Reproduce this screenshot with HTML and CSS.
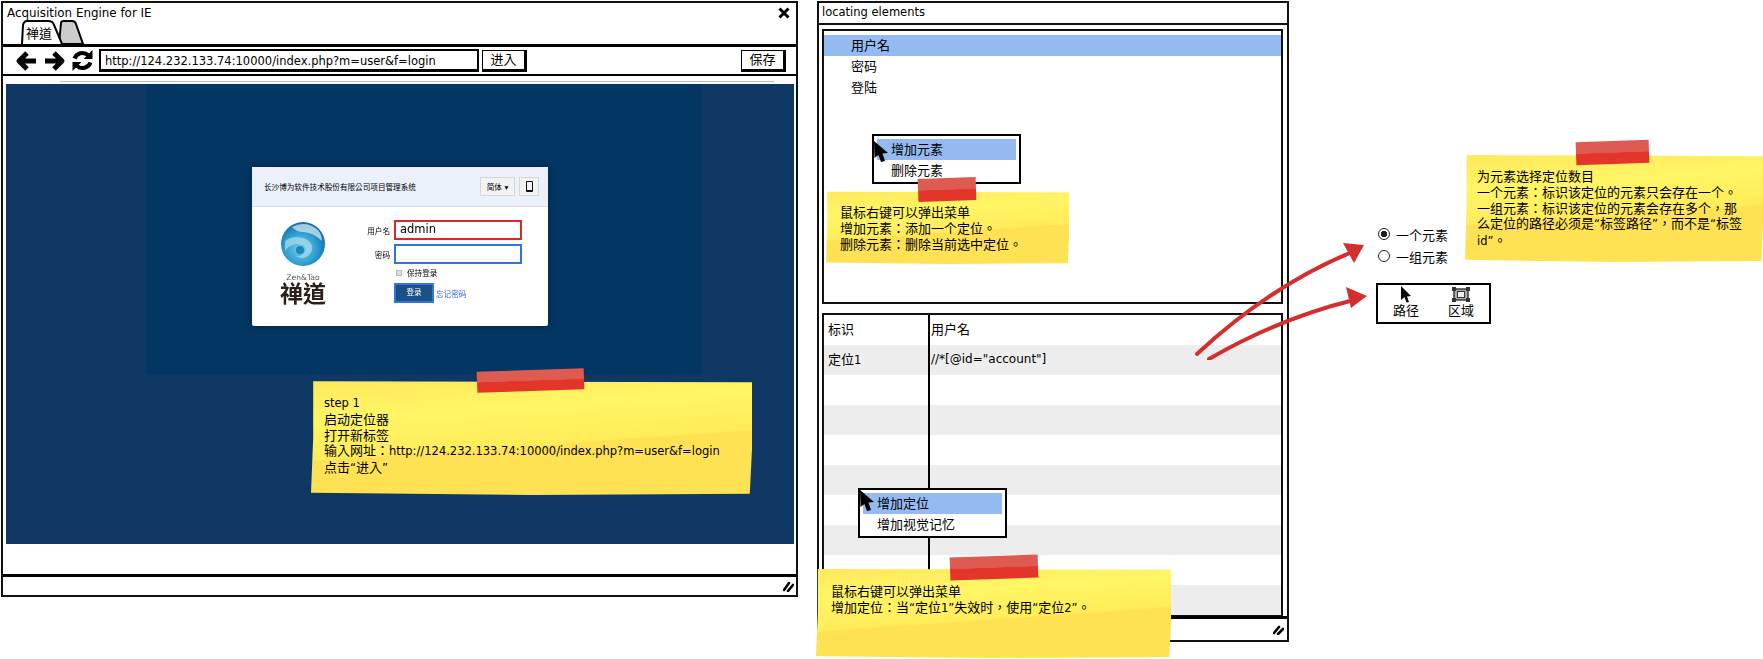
FILE: index.html
```html
<!DOCTYPE html>
<html lang="en">
<head>
    <meta charset="UTF-8">
    <title>Acquisition Engine for IE</title>
    <link rel="stylesheet" href="styles.css">
</head>
<body>
<div class="canvas">

    <!-- Browser window -->
    <section class="window browser">
        <div class="browser-head">
            <div class="title-row">
                <span>Acquisition Engine for IE</span>
                <svg class="close-icon" width="12" height="12" viewBox="0 0 12 12"><path d="M1.5 1.5 L10.5 10.5 M10.5 1.5 L1.5 10.5" stroke="#000" stroke-width="3"/></svg>
            </div>
            <svg class="tabs" width="66" height="24" viewBox="0 0 66 24">
                <path d="M38 24 L40 3 Q40 1 43 1 H51 Q54 1 55 4 L62 24 Z" fill="#ccc" stroke="#000" stroke-width="2"/>
                <path d="M1 24 L2 5 Q3 1 6 1 H27 Q32 1 33 5 L41 24" fill="#fff" stroke="#000" stroke-width="2"/>
                <text class="tab-label" x="5" y="18">禅道</text>
            </svg>
        </div>
        <div class="toolbar">
            <svg class="nav-icon" width="23" height="22" viewBox="0 0 23 22"><path d="M21 11 H5 M12 3 L4 11 L12 19" fill="none" stroke="#000" stroke-width="5" stroke-linejoin="round"/></svg>
            <svg class="nav-icon" width="23" height="22" viewBox="0 0 23 22"><path d="M2 11 H18 M11 3 L19 11 L11 19" fill="none" stroke="#000" stroke-width="5" stroke-linejoin="round"/></svg>
            <svg class="nav-icon" width="23" height="23" viewBox="0 0 23 23">
                <path d="M17 6 A8.5 8.5 0 0 0 3.5 9.5 M6 17 A8.5 8.5 0 0 0 19.5 13.5" fill="none" stroke="#000" stroke-width="4"/>
                <path d="M21.5 1 V10 H12.5 Z M1.5 22 V13 H10.5 Z" fill="#000"/>
            </svg>
            <div class="url-box">http://124.232.133.74:10000/index.php?m=user&amp;f=login</div>
            <div class="tool-btn">进入</div>
            <div class="tool-btn save-btn">保存</div>
        </div>
        <div class="browser-body">
            <div class="page-rule"></div>
            <div class="page-blue">
                <div class="page-inner">
                    <div class="login-card">
                        <div class="login-head">
                            <span>长沙博为软件技术股份有限公司项目管理系统</span>
                            <div class="login-head-btns">
                                <span class="lang-btn">简体 ▾</span>
                                <span class="phone-btn"><i></i></span>
                            </div>
                        </div>
                        <div class="login-body">
                            <div class="login-logo">
                                <svg width="46" height="46" viewBox="0 0 46 46">
                                    <defs>
                                        <radialGradient id="globe" cx="45%" cy="60%" r="60%">
                                            <stop offset="0" stop-color="#7fcbe6"/>
                                            <stop offset="0.6" stop-color="#2d9fd0"/>
                                            <stop offset="1" stop-color="#0e6ea8"/>
                                        </radialGradient>
                                    </defs>
                                    <circle cx="23" cy="23" r="22" fill="url(#globe)"/>
                                    <path d="M12 6 Q26 -1 38 9 Q42 14 42 20 Q34 12 24 11 Q16 11 12 6 Z" fill="#d5e6f0" opacity="0.75"/>
                                    <path d="M5 20 Q14 13 26 18 Q36 24 30 33 Q24 40 16 35 Q24 35 26 29 Q25 22 16 23 Q9 24 5 30 Z" fill="#a9def0" opacity="0.7"/>
                                    <circle cx="20" cy="29" r="4" fill="#1b86bd"/>
                                </svg>
                                <span class="logo-en">Zen&amp;Tao</span>
                                <span class="logo-cn">禅道</span>
                            </div>
                            <div class="login-form">
                                <label class="login-label">用户名</label>
                                <div class="login-input input-active">admin</div>
                                <label class="login-label">密码</label>
                                <div class="login-input"></div>
                                <div></div>
                                <div class="login-keep"><i></i>保持登录</div>
                                <div></div>
                                <div class="login-actions">
                                    <span class="login-btn">登录</span>
                                    <span class="login-forget">忘记密码</span>
                                </div>
                            </div>
                        </div>
                    </div>
                </div>
            </div>
        </div>
        <div class="status-bar">
            <svg class="grip" width="11" height="11" viewBox="0 0 11 11"><path d="M1 9 L6 2 M5 10 L10 4" stroke="#000" stroke-width="2.6" stroke-linecap="round"/></svg>
        </div>
    </section>

    <!-- Locating elements window -->
    <section class="window locator">
        <div class="locator-title">locating elements</div>
        <div class="panel list-panel">
            <div class="list-item selected">用户名</div>
            <div class="list-item">密码</div>
            <div class="list-item">登陆</div>
        </div>
        <div class="panel table-panel">
            <div class="row"><div class="cell-id">标识</div><div class="cell-value">用户名</div></div>
            <div class="row stripe"><div class="cell-id">定位<span class="latin">1</span></div><div class="cell-value">//*[@id="account"]</div></div>
            <div class="row"><div class="cell-id"></div><div class="cell-value"></div></div>
            <div class="row stripe"><div class="cell-id"></div><div class="cell-value"></div></div>
            <div class="row"><div class="cell-id"></div><div class="cell-value"></div></div>
            <div class="row stripe"><div class="cell-id"></div><div class="cell-value"></div></div>
            <div class="row"><div class="cell-id"></div><div class="cell-value"></div></div>
            <div class="row stripe"><div class="cell-id"></div><div class="cell-value"></div></div>
            <div class="row"><div class="cell-id"></div><div class="cell-value"></div></div>
            <div class="row stripe"><div class="cell-id"></div><div class="cell-value"></div></div>
        </div>
        <div class="status-bar">
            <svg class="grip" width="11" height="11" viewBox="0 0 11 11"><path d="M1 9 L6 3 M5 10 L10 5" stroke="#000" stroke-width="2.6" stroke-linecap="round"/></svg>
        </div>
    </section>

    <!-- Context menus -->
    <div class="menu menu-list">
        <div class="menu-item selected">增加元素</div>
        <div class="menu-item">删除元素</div>
    </div>
    <svg class="cursor cursor-list" width="16" height="23" viewBox="0 0 16 23"><path d="M1 1 L15 13 L9.5 13.5 L12 21 L8 22 L5.5 15 L1.5 18 Z" fill="#000"/></svg>

    <div class="menu menu-table">
        <div class="menu-item selected">增加定位</div>
        <div class="menu-item">增加视觉记忆</div>
    </div>
    <svg class="cursor cursor-table" width="16" height="23" viewBox="0 0 16 23"><path d="M1 1 L15 13 L9.5 13.5 L12 21 L8 22 L5.5 15 L1.5 18 Z" fill="#000"/></svg>

    <!-- Options next to the windows -->
    <div class="options">
        <div class="radio-row"><i class="radio checked"></i>一个元素</div>
        <div class="radio-row"><i class="radio"></i>一组元素</div>
        <div class="mode-box">
            <div class="mode">
                <svg width="12" height="17" viewBox="0 0 12 17"><path d="M1 0 L11 10 L7 10.5 L9 16 L6.5 16.5 L4.5 11 L1 14 Z" fill="#000"/></svg>
                路径
            </div>
            <div class="mode">
                <svg width="18" height="15" viewBox="0 0 18 15">
                    <rect x="2" y="2" width="14" height="11" fill="#aaa" stroke="#333" stroke-width="1.4"/>
                    <rect x="5.5" y="4.5" width="7" height="6" fill="#eee" stroke="#333"/>
                    <path d="M0 0 H4 V4 H0 Z M14 0 H18 V4 H14 Z M0 11 H4 V15 H0 Z M14 11 H18 V15 H14 Z" fill="#333"/>
                </svg>
                区域
            </div>
        </div>
    </div>

    <!-- Red arrows -->
    <svg class="arrows" width="200" height="130" viewBox="0 0 200 130">
        <path d="M17 124 Q90 56 172 22" fill="none" stroke="#d32f2f" stroke-width="4" stroke-linecap="round"/>
        <path d="M29 129 Q100 88 174 70" fill="none" stroke="#d32f2f" stroke-width="4" stroke-linecap="round"/>
        <path d="M184 15 L163 13 L174 33 Z M187 66 L166 57 L171 78 Z" fill="#d32f2f"/>
    </svg>

    <!-- Sticky notes -->
    <div class="note note-step">
        <span class="tape"></span>
        <span class="latin">step 1</span><br>
        启动定位器<br>
        打开新标签<br>
        输入网址：<span class="latin">http://124.232.133.74:10000/index.php?m=user&amp;f=login</span><br>
        点击<span class="latin">“</span>进入<span class="latin">”</span>
    </div>
    <div class="note note-menu">
        <span class="tape"></span>
        鼠标右键可以弹出菜单<br>
        增加元素：添加一个定位。<br>
        删除元素：删除当前选中定位。
    </div>
    <div class="note note-table">
        <span class="tape"></span>
        鼠标右键可以弹出菜单<br>
        增加定位：当<span class="latin">“</span>定位<span class="latin">1”</span>失效时，使用<span class="latin">“</span>定位<span class="latin">2”</span>。
    </div>
    <div class="note note-count">
        <span class="tape"></span>
        为元素选择定位数目<br>
        一个元素：标识该定位的元素只会存在一个。<br>
        一组元素：标识该定位的元素会存在多个，那<br>
        么定位的路径必须是<span class="latin">“</span>标签路径<span class="latin">”</span>，而不是<span class="latin">“</span>标签<br>
        <span class="latin">id”</span>。
    </div>

</div>
</body>
</html>
```

FILE: styles.css
```css
* {
    margin: 0;
    padding: 0;
    box-sizing: border-box;
}

body {
    background: #fff;
    color: #000;
    font-family: "DejaVu Sans", "Noto Sans CJK TC", sans-serif;
    font-size: 11.5px;
    overflow: hidden;
}

.canvas {
    position: relative;
    width: 1763px;
    height: 659px;
    overflow: hidden;
}

.latin {
    font-size: 11.5px;
}

.window {
    position: absolute;
    display: flex;
    flex-direction: column;
    background: #fff;
    border: 2px solid #111;
}

/* Browser window */
.browser {
    left: 1px;
    top: 1px;
    width: 797px;
    height: 596px;
}

.browser-head {
    display: flex;
    flex-direction: column;
    height: 44px;
    border-bottom: 3px solid #000;
}

.title-row {
    display: flex;
    justify-content: space-between;
    align-items: center;
    height: 20px;
    padding: 3px 6px 0 4px;
    font-size: 11.9px;
}

.tabs {
    margin-left: 18px;
    flex: none;
}

.tab-label {
    font-size: 13px;
}

.toolbar {
    display: flex;
    align-items: center;
    height: 29px;
    padding-left: 12px;
    border-bottom: 2px solid #000;
}

.nav-icon {
    margin-right: 5px;
    flex: none;
}

.url-box {
    width: 380px;
    height: 23px;
    padding-left: 4px;
    line-height: 20px;
    border: 2px solid #000;
    border-bottom-width: 3px;
}

.tool-btn {
    width: 45px;
    height: 22px;
    margin-left: 3px;
    border: 1px solid #000;
    border-right-width: 3px;
    border-bottom-width: 3px;
    font-size: 13px;
    line-height: 18px;
    text-align: center;
}

.save-btn {
    margin-left: 214px;
}

.browser-body {
    flex: 1;
    padding: 5px 2px 30px 3px;
    display: flex;
    flex-direction: column;
}

.page-rule {
    height: 1px;
    margin: 0 20px 2px 54px;
    background: #bbb;
}

.page-blue {
    flex: 1;
    padding-left: 140px;
    background: #0f3864;
}

.page-inner {
    width: 556px;
    height: 291px;
    padding: 83px 0 0 106px;
    background: #033663;
}

/* Login card inside the screenshot */
.login-card {
    width: 296px;
    height: 159px;
    background: #fff;
    border-radius: 2px;
    box-shadow: 0 0 6px rgba(0, 0, 0, 0.35);
    filter: blur(0.35px);
}

.login-head {
    display: flex;
    justify-content: space-between;
    align-items: center;
    height: 40px;
    padding: 0 9px 0 12px;
    background: #ebf1fb;
    border-bottom: 1px solid #d5dbe6;
    font-size: 7.6px;
}

.login-head-btns {
    display: flex;
    gap: 4px;
}

.lang-btn,
.phone-btn {
    display: flex;
    justify-content: center;
    align-items: center;
    height: 19px;
    background: #f2f2f2;
    border: 1px solid #d6d6d6;
    font-size: 7.6px;
}

.lang-btn {
    width: 35px;
}

.phone-btn {
    width: 20px;
}

.phone-btn i {
    width: 7px;
    height: 11px;
    border: 1.5px solid #111;
    border-bottom-width: 2.5px;
    border-radius: 1px;
}

.login-body {
    display: flex;
    height: 119px;
}

.login-logo {
    display: flex;
    flex-direction: column;
    align-items: center;
    width: 102px;
    padding: 14px 0 0 0;
}

.logo-en {
    margin-top: 6px;
    font-size: 7.6px;
    line-height: 9px;
    color: #555;
}

.logo-cn {
    font-size: 23px;
    line-height: 24px;
    font-weight: 700;
    color: #2a1f1a;
}

.login-form {
    display: grid;
    grid-template-columns: 36px 128px;
    grid-auto-rows: min-content;
    column-gap: 4px;
    row-gap: 4px;
    padding-top: 13px;
}

.login-label {
    align-self: center;
    text-align: right;
    font-size: 7.6px;
}

.login-input {
    height: 20px;
    padding-left: 4px;
    font-size: 11.5px;
    line-height: 15px;
    background: #fff;
    border: 2.5px solid #2f75dd;
}

.input-active {
    border-color: #d32a2a;
}

.login-keep {
    display: flex;
    align-items: center;
    gap: 5px;
    height: 9px;
    margin: 0 0 2px 2px;
    font-size: 7.6px;
}

.login-keep i {
    width: 6px;
    height: 6px;
    background: #ddd;
    border: 1px solid #bbb;
}

.login-actions {
    display: flex;
    align-items: center;
    gap: 2px;
}

.login-btn {
    width: 40px;
    height: 20px;
    line-height: 15px;
    text-align: center;
    color: #fff;
    font-size: 7.6px;
    background: #1a5083;
    border: 2.5px solid #2f75dd;
}

.login-forget {
    font-size: 7.6px;
    color: #2f5fd0;
}

.status-bar {
    display: flex;
    justify-content: flex-end;
    align-items: center;
    height: 21px;
    padding-right: 2px;
    border-top: 3px solid #000;
}

/* Locator window */
.locator {
    left: 817px;
    top: 1px;
    width: 472px;
    height: 641px;
}

.locator-title {
    height: 22px;
    padding-left: 3px;
    line-height: 19px;
    border-bottom: 2px solid #111;
}

.panel {
    margin: 0 4px 0 3px;
    border: 2px solid #111;
}

.list-panel {
    height: 275px;
    margin-top: 4px;
    padding-top: 4px;
}

.list-item {
    height: 21px;
    padding-left: 27px;
    font-size: 13px;
    line-height: 21px;
}

.selected {
    background: #93bbf2;
}

.table-panel {
    height: 303px;
    margin-top: 9px;
}

.row {
    display: flex;
    height: 30px;
    font-size: 13px;
    line-height: 29px;
}

.row:first-child {
    height: 30px;
}

.stripe {
    background: #ededed;
}

.cell-id {
    width: 106px;
    padding-left: 4px;
    border-right: 2px solid #000;
}

.cell-value {
    flex: 1;
    padding-left: 1px;
    font-size: 12px;
}

.row:first-child .cell-value {
    font-size: 13px;
}

.locator .status-bar {
    flex: 1;
    height: auto;
    padding-right: 3px;
}

/* Context menus */
.menu {
    position: absolute;
    width: 149px;
    height: 50px;
    padding: 3px;
    background: #fff;
    border: 2px solid #000;
    font-size: 13px;
}

.menu-item {
    height: 21px;
    padding-left: 14px;
    line-height: 21px;
}

.menu-list {
    left: 872px;
    top: 134px;
}

.menu-table {
    left: 858px;
    top: 488px;
}

.cursor {
    position: absolute;
}

.cursor-list {
    left: 873px;
    top: 140px;
}

.cursor-table {
    left: 859px;
    top: 489px;
}

/* Radios and path or area box */
.options {
    position: absolute;
    left: 1376px;
    top: 223px;
    display: flex;
    flex-direction: column;
    font-size: 13px;
}

.radio-row {
    display: flex;
    align-items: center;
    gap: 6px;
    height: 22px;
    padding-left: 1px;
}

.radio {
    width: 12px;
    height: 12px;
    margin-left: 1px;
    border: 1.5px solid #222;
    border-radius: 50%;
}

.radio.checked {
    background: radial-gradient(circle, #222 0 3px, #fff 3.5px);
}

.mode-box {
    display: flex;
    justify-content: space-between;
    width: 115px;
    height: 41px;
    margin-top: 16px;
    padding: 1px 15px 0 15px;
    border: 2px solid #000;
}

.mode {
    display: flex;
    flex-direction: column;
    align-items: center;
    line-height: 16px;
}

.mode svg {
    height: 17px;
}

.arrows {
    position: absolute;
    left: 1180px;
    top: 230px;
}

/* Sticky notes */
.note {
    position: absolute;
    isolation: isolate;
    font-size: 13px;
    line-height: 15.75px;
    white-space: nowrap;
    color: #000;
}

.note::before {
    content: "";
    position: absolute;
    inset: 0;
    z-index: -1;
    background: linear-gradient(176deg, #ffe85c 0, #fff565 28%, #ffec5a 55%, #ffe254 56%, #ffe254 100%);
    clip-path: polygon(0.5% 1%, 45% 1.5%, 100% 2%, 100% 60%, 99.5% 99%, 50% 100%, 0 98%, 0.5% 50%);
}

.tape {
    position: absolute;
    background: linear-gradient(#df5a50 0, #df5a50 50%, #e33529 52%, #e33529 100%);
    transform: rotate(-2deg);
}

.note-step {
    left: 311px;
    top: 380px;
    width: 441px;
    height: 115px;
    padding: 15px 0 0 13px;
}

.note-step .tape {
    left: 166px;
    top: -10px;
    width: 107px;
    height: 21px;
}

.note-menu {
    left: 826px;
    top: 191px;
    width: 243px;
    height: 73px;
    padding: 14px 0 0 14px;
}

.note-menu .tape {
    left: 92px;
    top: -13px;
    width: 58px;
    height: 23px;
}

.note-table {
    left: 816px;
    top: 568px;
    width: 355px;
    height: 90px;
    padding: 16px 0 0 15px;
}

.note-table .tape {
    left: 134px;
    top: -12px;
    width: 88px;
    height: 23px;
}

.note-count {
    left: 1465px;
    top: 154px;
    width: 298px;
    height: 108px;
    padding: 15px 0 0 12px;
}

.note-count .tape {
    left: 111px;
    top: -13px;
    width: 73px;
    height: 23px;
}
```
